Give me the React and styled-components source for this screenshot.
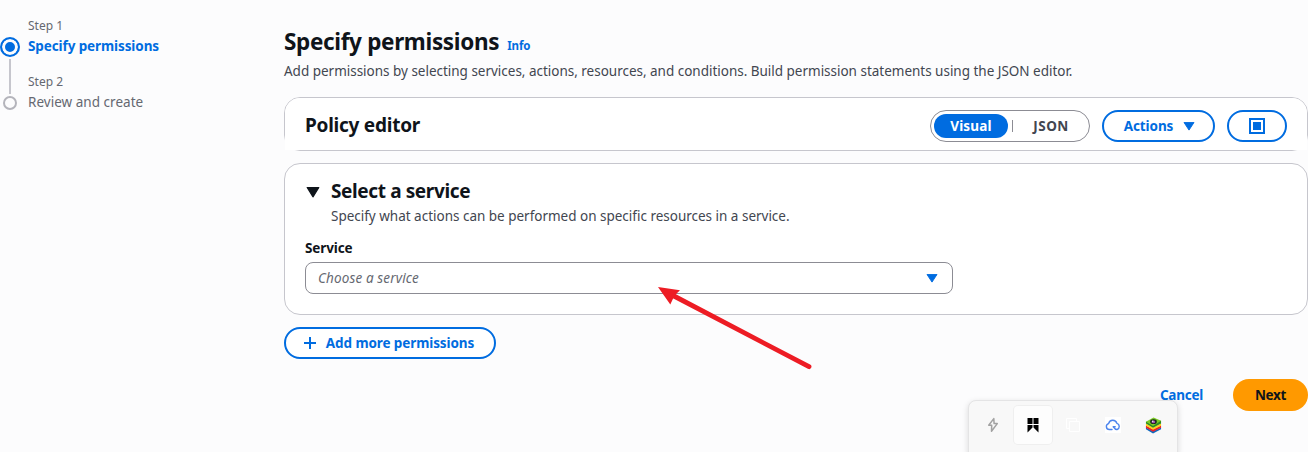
import React from "react";
import styled, { createGlobalStyle } from "styled-components";

const blue = "#006ce0";
const ink = "#0f141a";
const grey = "#424650";

const GlobalStyle = createGlobalStyle`
  * { box-sizing: border-box; }
  html, body { margin: 0; height: 100%; overflow: hidden; }
  body {
    background: #fcfcfd;
    color: ${ink};
    font-family: "Noto Sans", "Open Sans", sans-serif;
    font-size: 13.5px;
    line-height: 20px;
    white-space: nowrap;
  }
  svg { display: block; flex: none; }
`;

const Page = styled.div`
  position: relative;
  display: flex;
  width: 1308px;
  height: 452px;
  overflow: hidden;
`;

const Steps = styled.nav`
  width: 284px;
  flex: none;
  padding-top: 16px;
`;

const Step = styled.div`
  display: flex;
  height: 56px;
`;

const Rail = styled.div`
  width: 20px;
  margin-right: 8px;
  padding-top: ${(p) => (p.$current ? 21 : 24)}px;
  display: flex;
  flex-direction: column;
  align-items: center;
`;

const Dot = styled.span`
  flex: none;
  width: ${(p) => (p.$current ? 20 : 14)}px;
  height: ${(p) => (p.$current ? 20 : 14)}px;
  border: 2px solid ${(p) => (p.$current ? blue : "#b4b4bb")};
  border-radius: 50%;
  background: ${(p) => (p.$current ? blue : "transparent")};
  box-shadow: ${(p) => (p.$current ? "inset 0 0 0 3px #fcfcfd" : "none")};
`;

const Connector = styled.span`
  flex: none;
  width: 2px;
  height: 35px;
  margin-top: 2px;
  background: #c6c6cd;
`;

const StepText = styled.div`
  color: #656871;
`;

const StepNumber = styled.div`
  font-size: 12px;
  letter-spacing: 0;
`;

const StepName = styled.div`
  color: ${(p) => (p.$current ? blue : "#656871")};
  font-weight: ${(p) => (p.$current ? 700 : 400)};
  letter-spacing: ${(p) => (p.$current ? "-0.1px" : "0.03px")};
`;

const Main = styled.main`
  flex: 1;
  min-width: 0;
`;

const PageHeader = styled.header`
  padding-top: 27px;
  height: 97px;
`;

const TitleRow = styled.div`
  display: flex;
  align-items: baseline;
  gap: 8px;
  height: 30px;
`;

const Title = styled.h1`
  margin: 0;
  font-size: 22.5px;
  line-height: 30px;
  font-weight: 700;
  letter-spacing: -0.33px;
`;

const Info = styled.a`
  color: ${blue};
  font-size: 11.5px;
  font-weight: 700;
  letter-spacing: -0.1px;
`;

const Description = styled.p`
  margin: 0;
  color: ${grey};
  letter-spacing: ${(p) => p.$spacing || "-0.015px"};
`;

const PageDescription = styled(Description)`
  margin-top: 4px;
`;

const Card = styled.section`
  border: 1px solid #c6c6cd;
  border-radius: 16px;
  background: #fff;
`;

const EditorCard = styled(Card)`
  height: 54px;
`;

const EditorHeader = styled.div`
  display: flex;
  align-items: center;
  height: 52px;
  padding: 4px 20px 0;
  background: #fff;
  border-radius: 15px 15px 0 0;
`;

const Heading = styled.h2`
  margin: 0;
  font-size: 19px;
  line-height: 24px;
  font-weight: 700;
  letter-spacing: ${(p) => p.$spacing};
`;

const EditorTitle = styled(Heading)`
  flex: 1;
  padding-bottom: 2px;
`;

const Segments = styled.div`
  display: flex;
  align-items: center;
  width: 160px;
  height: 32px;
  padding: 0 1px 0 3px;
  border: 1px solid #8c8c94;
  border-radius: 16px;
`;

const Segment = styled.button`
  flex: none;
  width: 74px;
  height: 24px;
  padding: 0;
  border: 0;
  border-radius: 12px;
  background: ${(p) => (p.$selected ? blue : "transparent")};
  color: ${(p) => (p.$selected ? "#fff" : grey)};
  font: 700 13.5px/22px "Noto Sans", sans-serif;
  letter-spacing: ${(p) => (p.$selected ? "0.2px" : "0.5px")};
`;

const Divider = styled.span`
  width: 1px;
  height: 12px;
  margin: 0 1px 0 4px;
  background: #8c8c94;
`;

const Button = styled.button`
  display: flex;
  align-items: center;
  justify-content: center;
  gap: ${(p) => p.$gap || 0}px;
  width: ${(p) => p.$width}px;
  height: 32px;
  padding: 0 ${(p) => p.$padRight || 0}px 0 ${(p) => p.$padLeft || 0}px;
  border: 2px solid ${blue};
  border-radius: 16px;
  background: #fff;
  color: ${blue};
  font: 700 13.5px/20px "Noto Sans", sans-serif;
  letter-spacing: -0.1px;
`;

const Controls = styled.div`
  display: flex;
  gap: 12px;
`;

const ServiceCard = styled(Card)`
  height: 152px;
  margin-top: 12px;
  padding: 15px 20px 0;
`;

const ServiceHead = styled.div`
  display: flex;
  gap: 11px;
`;

const Caret = styled.span`
  padding: 8px 0 0 1px;
  width: 15px;
`;

const ServiceDescription = styled(Description)`
  margin-top: 3px;
`;

const Label = styled.label`
  display: block;
  margin-top: 12px;
  font-weight: 700;
  letter-spacing: -0.13px;
`;

const Select = styled.div`
  display: flex;
  align-items: center;
  justify-content: space-between;
  width: 648px;
  height: 32px;
  margin-top: 4px;
  padding: 0 14px 0 12px;
  border: 1px solid #8c8c94;
  border-radius: 8px;
  color: #656871;
  font-style: italic;
  letter-spacing: 0.13px;
`;

const AddRow = styled.div`
  margin-top: 12px;
`;

const Footer = styled.footer`
  display: flex;
  justify-content: flex-end;
  align-items: center;
  gap: 30px;
  margin-top: 20px;
`;

const Cancel = styled.a`
  color: ${blue};
  font-weight: 700;
  letter-spacing: -0.25px;
`;

const Next = styled.button`
  width: 75px;
  height: 32px;
  padding: 0;
  border: 0;
  border-radius: 16px;
  background: #ff9900;
  color: ${ink};
  font: 700 13.5px/20px "Noto Sans", sans-serif;
  letter-spacing: -0.3px;
`;

const Tray = styled.div`
  position: absolute;
  left: 968px;
  top: 400px;
  width: 210px;
  height: 60px;
  display: flex;
  gap: 2px;
  padding: 5px;
  border: 1px solid #e4e4e5;
  border-radius: 8px;
  background: #f8f8f8;
  box-shadow: 0 2px 6px rgba(0, 0, 0, 0.14);
`;

const TrayItem = styled.span`
  display: flex;
  flex: none;
  align-items: center;
  justify-content: center;
  width: 38px;
  height: 38px;
  border-radius: 4px;
  background: ${(p) => (p.$active ? "#fdfdfd" : "transparent")};
  box-shadow: ${(p) => (p.$active ? "0 0 0 1px #efefef" : "none")};
`;

const CloudTile = styled.span`
  display: flex;
  align-items: center;
  justify-content: center;
  width: 16px;
  height: 16px;
  background: #fff;
`;

const Annotation = styled.svg`
  position: absolute;
  left: 650px;
  top: 280px;
  pointer-events: none;
`;

const Triangle = ({ width, height, color }) => (
  <svg width={width} height={height} viewBox="0 0 12 10" preserveAspectRatio="none">
    <path d="M1 .5h10L6 9z" fill={color} stroke={color} strokeWidth="1" strokeLinejoin="round" />
  </svg>
);

export default function App() {
  return (
    <>
      <GlobalStyle />
      <Page>
        <Steps>
          <Step>
            <Rail $current><Dot $current /><Connector /></Rail>
            <StepText>
              <StepNumber>Step 1</StepNumber>
              <StepName $current>Specify permissions</StepName>
            </StepText>
          </Step>
          <Step>
            <Rail><Dot /></Rail>
            <StepText>
              <StepNumber>Step 2</StepNumber>
              <StepName>Review and create</StepName>
            </StepText>
          </Step>
        </Steps>

        <Main>
          <PageHeader>
            <TitleRow>
              <Title>Specify permissions</Title>
              <Info>Info</Info>
            </TitleRow>
            <PageDescription>
              Add permissions by selecting services, actions, resources, and conditions. Build permission statements using the JSON editor.
            </PageDescription>
          </PageHeader>

          <EditorCard>
            <EditorHeader>
              <EditorTitle $spacing="-0.25px">Policy editor</EditorTitle>
              <Controls>
                <Segments>
                  <Segment $selected>Visual</Segment>
                  <Divider />
                  <Segment>JSON</Segment>
                </Segments>
                <Button $width={113} $gap={10} $padLeft={2}>
                  Actions
                  <Triangle width={12} height={9} color={blue} />
                </Button>
                <Button $width={60}>
                  <svg width="16" height="16" viewBox="0 0 16 16">
                    <path d="M1 1h14v14H1z" fill="none" stroke={blue} strokeWidth="2" />
                    <path d="M4 4h8v8H4z" fill={blue} />
                  </svg>
                </Button>
              </Controls>
            </EditorHeader>
          </EditorCard>

          <ServiceCard>
            <ServiceHead>
              <Caret><Triangle width={14} height={11} color={ink} /></Caret>
              <div>
                <Heading $spacing="-0.38px">Select a service</Heading>
                <ServiceDescription $spacing="-0.01px">
                  Specify what actions can be performed on specific resources in a service.
                </ServiceDescription>
              </div>
            </ServiceHead>
            <Label>Service</Label>
            <Select>
              Choose a service
              <Triangle width={12} height={9} color={blue} />
            </Select>
          </ServiceCard>

          <AddRow>
            <Button $width={212} $gap={10} $padRight={2}>
              <svg width="12" height="12" viewBox="0 0 12 12">
                <path d="M6 0v12M0 6h12" stroke={blue} strokeWidth="2" />
              </svg>
              Add more permissions
            </Button>
          </AddRow>

          <Footer>
            <Cancel>Cancel</Cancel>
            <Next>Next</Next>
          </Footer>
        </Main>

        <Tray>
          <TrayItem>
            <svg width="12" height="16" viewBox="0 0 12 16">
              <path d="M6.8 1.6 1.7 8.2h3L4.5 14.3 10.3 6.6H7.1z" fill="none" stroke="#a2a2a2" strokeWidth="1.5" strokeLinejoin="round" />
            </svg>
          </TrayItem>
          <TrayItem $active>
            <svg width="12" height="16" viewBox="0 0 12 16">
              <path d="M.5 1h5v6h-5zM6.5 1h5v6h-5zM.5 8h5v2.5l-5 5zM6.5 8h5v7.5l-5-5z" fill="#000" />
            </svg>
          </TrayItem>
          <TrayItem>
            <svg width="16" height="16" viewBox="0 0 16 16" fill="none" stroke="#fff">
              <path d="M4.5 4.5h10v10h-10zM4.5 11.5h-3v-10h10v3" />
            </svg>
          </TrayItem>
          <TrayItem>
            <CloudTile>
              <svg width="16" height="16" viewBox="0 0 16 16" fill="none" stroke="#4b84ed" strokeWidth="1.4" strokeLinecap="round" strokeLinejoin="round">
                <path d="M7 12.5H4.3a3 3 0 0 1-.7-5.9 4.3 4.3 0 0 1 8.3-.2 3.2 3.2 0 0 1 .2 6.1c-1.8.2-2.7-1.1-3.5-2.4" />
                <path d="M8.2 9.7h2" />
              </svg>
            </CloudTile>
          </TrayItem>
          <TrayItem>
            <svg width="17" height="17" viewBox="0 0 17 18">
              <path d="M.5 11v2l7.5 4.5 8.5-4.5v-2L8 15z" fill="#1268bd" />
              <path d="M.5 9v2.3L8 15.6l8.5-4.3V9L8 13z" fill="#ed2024" />
              <path d="M.5 7v2.2L8 13.6l8.5-4.4V7L8 11z" fill="#ffd21c" />
              <path d="M.5 5v2L8 11.5 16.5 7V4z" fill="#2c8c20" />
              <path d="M.5 5 8.5.5l8 3.5L8 9.6z" fill="#7acb24" />
              <ellipse cx="8.5" cy="5" rx="3.5" ry="2.5" fill="#18251c" />
              <ellipse cx="8.4" cy="5.2" rx="2" ry="1.4" fill="#9a5aa8" />
              <circle cx="7.7" cy="4.5" r=".7" fill="#fff" />
            </svg>
          </TrayItem>
        </Tray>

        <Annotation width="170" height="96" viewBox="650 280 170 96">
          <path d="M673 295.5 809 366.7" stroke="#ed1c24" strokeWidth="4.8" strokeLinecap="round" />
          <path d="M658 287 680 290.3 674.5 295.5 670.3 304.5z" fill="#ed1c24" />
        </Annotation>
      </Page>
    </>
  );
}
